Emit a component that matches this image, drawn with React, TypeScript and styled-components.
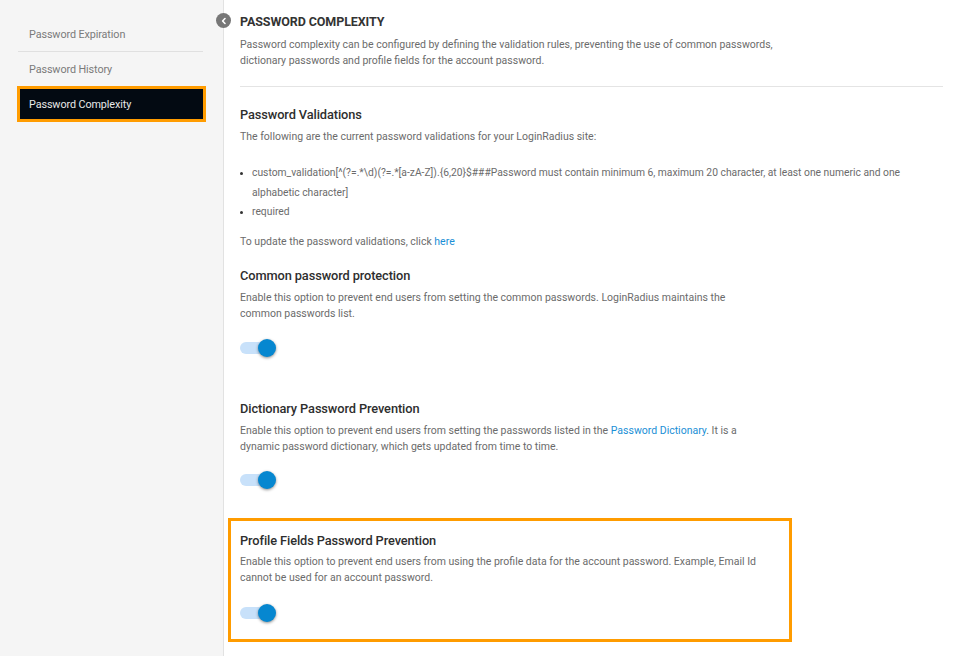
import React from "react"
import styled, { createGlobalStyle } from "styled-components"

const Global = createGlobalStyle`
  html, body {
    margin: 0;
    padding: 0;
    background: #ffffff;
    font-family: Roboto, "Noto Sans", Arial, sans-serif;
  }
  * { box-sizing: border-box; }
`

const Page = styled.div`
  display: flex;
  width: 956px;
  height: 656px;
  overflow: hidden;
`

const Sidebar = styled.nav`
  width: 224px;
  flex-shrink: 0;
  background: #f5f5f5;
  border-right: 1px solid #e2e2e2;
  padding: 18px 17px 0 17px;
  position: relative;
`

const NavItem = styled.div<{ $active?: boolean; $divider?: boolean }>`
  height: ${(p) => (p.$active ? "36px" : "34px")};
  display: flex;
  align-items: center;
  padding-left: ${(p) => (p.$active ? "9px" : "11px")};
  font-size: 10.8px;
  letter-spacing: -0.1px;
  color: ${(p) => (p.$active ? "#e8e8e8" : "#7a7a7a")};
  background: ${(p) => (p.$active ? "#030a12" : "transparent")};
  border: ${(p) => (p.$active ? "3px solid #ff9c00" : "none")};
  border-bottom: ${(p) =>
    p.$divider ? "1px solid #e0e0e0" : p.$active ? "3px solid #ff9c00" : "none"};
  margin-right: ${(p) => (p.$active ? "0" : "3px")};
  margin-left: ${(p) => (p.$active ? "0" : "1px")};
`

const Collapse = styled.div`
  position: absolute;
  top: 13px;
  right: -8px;
  width: 15px;
  height: 15px;
  border-radius: 50%;
  background: #777777;
  display: flex;
  align-items: center;
  justify-content: center;
`

const Main = styled.main`
  flex: 1;
  padding: 14px 13px 0 16px;
  color: #333;
`

const Title = styled.h1`
  margin: 0 0 8px 0;
  font-size: 12.5px;
  font-weight: 700;
  color: #333333;
  letter-spacing: -0.1px;
`

const Text = styled.p<{ $gap?: number }>`
  margin: 0 0 ${(p) => p.$gap ?? 0}px 0;
  font-size: 10.5px;
  line-height: 16px;
  color: #6b6b6b;
  white-space: nowrap;
`

const Rule = styled.hr`
  border: none;
  border-top: 1px solid #e4e4e4;
  margin: 17px 0 20px 0;
`

const Heading = styled.h2<{ $gap?: number }>`
  margin: 0 0 ${(p) => p.$gap ?? 7}px 0;
  font-size: 12.8px;
  font-weight: 500;
  color: #2e2e2e;
  letter-spacing: -0.1px;
`

const List = styled.ul`
  margin: 18px 0 12px 0;
  padding-left: 12px;
  font-size: 10.3px;
  line-height: 19.5px;
  color: #6b6b6b;
  white-space: nowrap;
  li::marker { color: #333; font-size: 9px; }
`

const Link = styled.a`
  color: #1a8fd6;
  text-decoration: none;
`

const Section = styled.section``

const Highlight = styled.section`
  border: 3px solid #ff9c00;
  margin: 0 151px 0 -12px;
  padding: 12px 9px 20px 9px;
`

const Track = styled.div`
  position: relative;
  width: 32px;
  height: 12px;
  border-radius: 6px;
  background: #c8e1fa;
`

const Knob = styled.div`
  position: absolute;
  top: -3px;
  right: -4px;
  width: 18px;
  height: 18px;
  border-radius: 50%;
  background: #0687d0;
  box-shadow: 0 1px 3px rgba(0, 0, 0, 0.45);
`

const ToggleWrap = styled.div<{ $top: number; $bottom: number }>`
  padding-top: ${(p) => p.$top}px;
  padding-bottom: ${(p) => p.$bottom}px;
`

function Toggle({ top, bottom }: { top: number; bottom: number }) {
  return (
    <ToggleWrap $top={top} $bottom={bottom}>
      <Track>
        <Knob />
      </Track>
    </ToggleWrap>
  )
}

export default function App() {
  return (
    <Page>
      <Global />
      <Sidebar>
        <NavItem $divider>Password Expiration</NavItem>
        <NavItem>Password History</NavItem>
        <NavItem $active>Password Complexity</NavItem>
        <Collapse>
          <svg width="8" height="8" viewBox="0 0 8 8">
            <path d="M5 1.5 L2.6 4 L5 6.5" stroke="#fff" strokeWidth="1.6" fill="none" strokeLinecap="round" strokeLinejoin="round" />
          </svg>
        </Collapse>
      </Sidebar>
      <Main>
        <Title>PASSWORD COMPLEXITY</Title>
        <Text>
          Password complexity can be configured by defining the validation rules, preventing the use of common passwords,
          <br />
          dictionary passwords and profile fields for the account password.
        </Text>
        <Rule />
        <Section>
          <Heading>Password Validations</Heading>
          <Text>The following are the current password validations for your LoginRadius site:</Text>
          <List>
            <li>
              custom_validation[^(?=.*\d)(?=.*[a-zA-Z]).&#123;6,20&#125;$###Password must contain minimum 6, maximum 20 character, at least one numeric and one
              <br />
              alphabetic character]
            </li>
            <li>required</li>
          </List>
          <Text $gap={18}>
            To update the password validations, click <Link href="#">here</Link>
          </Text>
        </Section>
        <Section>
          <Heading>Common password protection</Heading>
          <Text>
            Enable this option to prevent end users from setting the common passwords. LoginRadius maintains the
            <br />
            common passwords list.
          </Text>
          <Toggle top={20} bottom={47} />
        </Section>
        <Section>
          <Heading>Dictionary Password Prevention</Heading>
          <Text>
            Enable this option to prevent end users from setting the passwords listed in the{" "}
            <Link href="#">Password Dictionary</Link>. It is a
            <br />
            dynamic password dictionary, which gets updated from time to time.
          </Text>
          <Toggle top={19} bottom={32} />
        </Section>
        <Highlight>
          <Heading $gap={6}>Profile Fields Password Prevention</Heading>
          <Text>
            Enable this option to prevent end users from using the profile data for the account password. Example, Email Id
            <br />
            cannot be used for an account password.
          </Text>
          <Toggle top={21} bottom={0} />
        </Highlight>
      </Main>
    </Page>
  )
}
